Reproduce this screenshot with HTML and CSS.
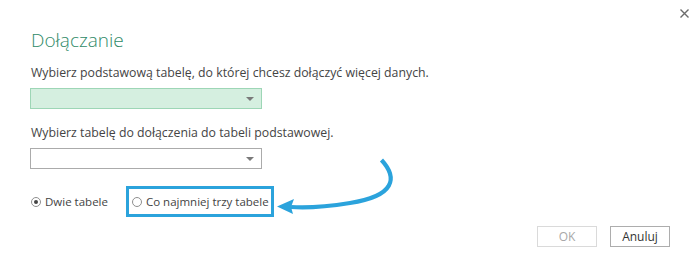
FILE: index.html
```html
<!DOCTYPE html>
<html lang="pl">
<head>
<meta charset="utf-8">
<link rel="stylesheet" href="styles.css">
</head>
<body>
<div class="dialog">
  <div class="topbar">
    <span class="close" aria-label="Zamknij">
      <svg width="9" height="9" viewBox="0 0 9 9"><path d="M0.5 0.5 L8.5 8.5 M8.5 0.5 L0.5 8.5" stroke="#6b6b6b" stroke-width="1.4" fill="none"/></svg>
    </span>
  </div>
  <h1 class="title">Dołączanie</h1>
  <p class="label label-first">Wybierz podstawową tabelę, do której chcesz dołączyć więcej danych.</p>
  <div class="select select-active"><span class="caret"></span></div>
  <p class="label label-second">Wybierz tabelę do dołączenia do tabeli podstawowej.</p>
  <div class="select"><span class="caret"></span></div>
  <div class="options">
    <label class="option"><span class="radio checked"></span>Dwie tabele</label>
    <label class="option highlight"><span class="radio"></span>Co najmniej trzy tabele</label>
  </div>
  <div class="buttons">
    <button class="btn btn-disabled">OK</button>
    <button class="btn">Anuluj</button>
  </div>
  <svg class="arrow" width="699" height="280" viewBox="0 0 699 280">
    <path d="M381.5 160 C 398 178, 395 196, 350 203 C 325 207, 305 208, 291 207" stroke="#2ba3dc" stroke-width="4.2" fill="none" stroke-linecap="butt"/>
    <path d="M277 206.5 L 294 199 L 291 207 L 293 214 Z" fill="#2ba3dc"/>
  </svg>
</div>
</body>
</html>
```

FILE: styles.css
```css
* { box-sizing: border-box; }
html, body { margin: 0; padding: 0; background: #ffffff; }
body {
  font-family: "Open Sans", "DejaVu Sans", sans-serif;
  color: #444444;
  width: 699px;
  height: 280px;
  overflow: hidden;
}
.dialog {
  position: relative;
  width: 699px;
  height: 280px;
  padding: 0 0 0 30px;
}
.topbar {
  display: flex;
  justify-content: flex-end;
  height: 26px;
  padding: 9px 10px 0 0;
}
.close { display: block; width: 9px; height: 9px; line-height: 0; }
.title {
  margin: 0;
  font-weight: 300;
  font-size: 19px;
  line-height: 28px;
  color: #2f8a68;
  padding-left: 1px;
}
.label {
  margin: 0;
  font-size: 12.3px;
  line-height: 16px;
  color: #444444;
  padding-left: 1px;
}
.label-first { margin-top: 11px; }
.label-second { margin-top: 16px; }
.select {
  position: relative;
  width: 232px;
  height: 21px;
  border: 1px solid #ababab;
  background: #ffffff;
  margin-top: 7px;
}
.select-active {
  background: #d5efe0;
  border-color: #9dd6b6;
}
.caret {
  position: absolute;
  right: 7px;
  top: 8px;
  width: 0; height: 0;
  border-left: 4px solid transparent;
  border-right: 4px solid transparent;
  border-top: 4px solid #7a7a7a;
}
.options {
  display: flex;
  align-items: center;
  margin-top: 17px;
  height: 31px;
}
.option {
  display: flex;
  align-items: center;
  font-size: 11.5px;
  color: #444444;
  line-height: 16px;
  white-space: nowrap;
}
.option:first-child { margin-right: 18px; padding-left: 1px; }
.radio {
  flex: none;
  width: 10px; height: 10px;
  border: 1px solid #8f8f8f;
  border-radius: 50%;
  margin-right: 4px;
  display: flex;
  align-items: center;
  justify-content: center;
  background: #fff;
}
.radio.checked::after {
  content: "";
  width: 4px; height: 4px;
  border-radius: 50%;
  background: #444444;
}
.highlight {
  border: 3px solid #2ba3dc;
  height: 31px;
  width: 148px;
  padding-left: 3px;
}
.buttons {
  display: flex;
  justify-content: flex-end;
  gap: 13px;
  margin-top: 9px;
  padding-right: 29px;
}
.btn {
  width: 60px;
  height: 21px;
  border: 1px solid #adadad;
  background: #ffffff;
  font-family: "Open Sans", "DejaVu Sans", sans-serif;
  font-size: 12px;
  color: #333333;
  padding: 0;
  line-height: 19px;
}
.btn-disabled { border-color: #dadada; color: #a8a8a8; }
.arrow { position: absolute; left: 0; top: 0; pointer-events: none; }
```
